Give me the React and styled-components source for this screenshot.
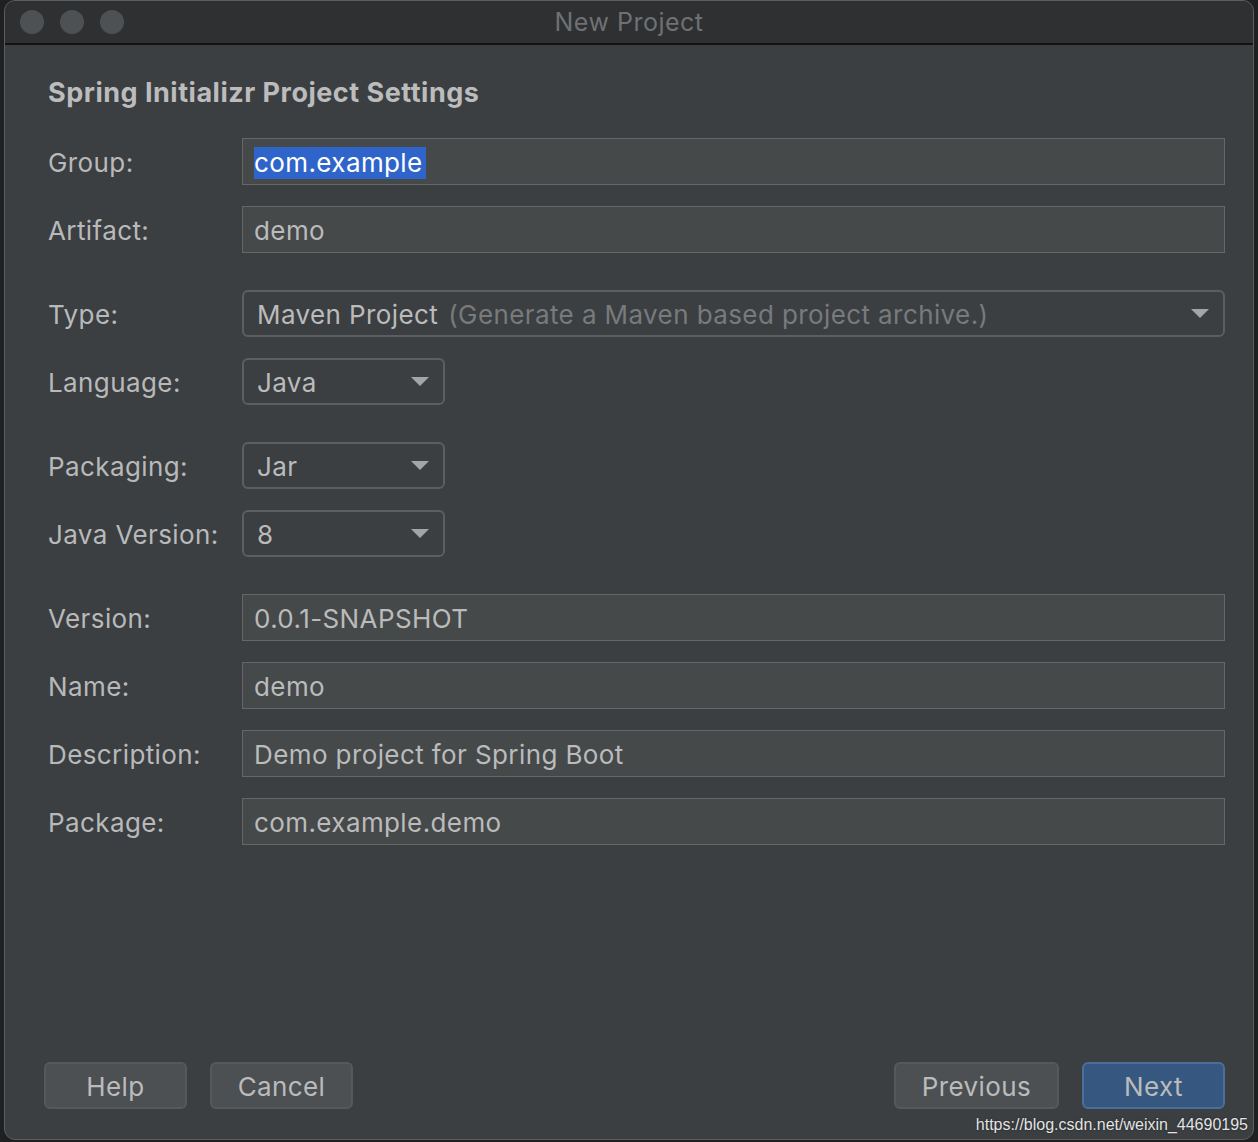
import React from 'react'
import styled, { createGlobalStyle } from 'styled-components'

const GlobalStyle = createGlobalStyle`
	html, body {
		margin: 0;
		padding: 0;
		background: #1f2022;
	}
	body {
		font-family: Inter, "Liberation Sans", sans-serif;
		-webkit-font-smoothing: antialiased;
	}
`

const Page = styled.div`
	width: 1258px;
	height: 1142px;
	padding: 0 4px 2px 4px;
	box-sizing: border-box;
	position: relative;
	overflow: hidden;
`

const Window = styled.div`
	height: 100%;
	display: flex;
	flex-direction: column;
	background: #3b3f42;
	border: 1px solid #5b5d5f;
	border-radius: 11px;
	overflow: hidden;
	box-sizing: border-box;
`

const TitleBar = styled.div`
	height: 42px;
	flex: none;
	display: flex;
	align-items: center;
	position: relative;
	background: #2e3032;
	border-bottom: 2px solid #111213;
	padding-left: 15px;
	gap: 16px;
`

const Light = styled.span`
	width: 24px;
	height: 24px;
	border-radius: 50%;
	background: #4e5153;
`

const Title = styled.div`
	position: absolute;
	left: 0;
	right: 0;
	text-align: center;
	font-size: 25px;
	letter-spacing: 0.5px;
	color: #6e7173;
	pointer-events: none;
`

const Body = styled.div`
	flex: 1;
	display: flex;
	flex-direction: column;
	padding: 32px 28px 0 43px;
`

const Heading = styled.h1`
	margin: 0 0 29px 0;
	font-size: 27px;
	line-height: 32px;
	font-weight: 700;
	color: #bcbcbc;
	letter-spacing: 0.5px;
`

const Section = styled.div`
	display: grid;
	grid-template-columns: 194px 1fr;
	row-gap: 21px;
	margin-bottom: 37px;
`

const Label = styled.label`
	display: flex;
	align-items: center;
	padding-top: 2px;
	font-size: 26px;
	color: #b9b9b9;
	letter-spacing: 0.4px;
`

const TextField = styled.div`
	height: 47px;
	box-sizing: border-box;
	display: flex;
	align-items: center;
	padding: 2px 11px 0 11px;
	background: #45494a;
	border: 1px solid #656767;
	font-size: 26px;
	color: #bbbbbb;
	letter-spacing: 0.4px;
`

const Selection = styled.span`
	background: #2f65ca;
	color: #ffffff;
	line-height: 32px;
	padding-right: 3px;
`

const Combo = styled.div`
	width: ${p => (p.$narrow ? '203px' : 'auto')};
	height: 47px;
	box-sizing: border-box;
	display: flex;
	align-items: center;
	padding: 2px 14px 0 13px;
	border: 2px solid #5c5f61;
	border-radius: 6px;
	font-size: 26px;
	color: #bbbbbb;
	letter-spacing: 0.4px;
`

const ComboText = styled.span`
	flex: 1;
	white-space: nowrap;
`

const Hint = styled.span`
	color: #787a7c;
	margin-left: 10px;
`

const Arrow = styled.span`
	width: 0;
	height: 0;
	margin-top: -3px;
	border-left: 9px solid transparent;
	border-right: 9px solid transparent;
	border-top: 9px solid #a3a5a7;
`

const Footer = styled.div`
	flex: none;
	display: flex;
	align-items: center;
	gap: 23px;
	padding: 0 28px 30px 39px;
`

const Button = styled.button`
	width: ${p => p.$w || 143}px;
	height: 47px;
	box-sizing: border-box;
	border-radius: 6px;
	border: 2px solid ${p => (p.$primary ? '#4a6f98' : '#56595b')};
	background: ${p => (p.$primary ? '#365880' : '#4c5052')};
	color: #bbbbbb;
	font-family: inherit;
	font-size: 26px;
	letter-spacing: 0.4px;
	padding: 2px 0 0 0;
`

const Spacer = styled.div`
	flex: 1;
`

const Watermark = styled.div`
	position: absolute;
	right: 10px;
	bottom: 8px;
	font-family: "Liberation Sans", Arial, sans-serif;
	font-size: 16px;
	color: #e4e4e4;
	text-shadow: 0 0 2px rgba(0, 0, 0, 0.6);
`

function Field({ label, children }) {
	return (
		<>
			<Label>{label}</Label>
			{children}
		</>
	)
}

export default function App() {
	return (
		<>
			<GlobalStyle />
			<Page>
				<Window>
					<TitleBar>
						<Light />
						<Light />
						<Light />
						<Title>New Project</Title>
					</TitleBar>
					<Body>
						<Heading>Spring Initializr Project Settings</Heading>
						<Section>
							<Field label='Group:'>
								<TextField><Selection>com.example</Selection></TextField>
							</Field>
							<Field label='Artifact:'>
								<TextField>demo</TextField>
							</Field>
						</Section>
						<Section>
							<Field label='Type:'>
								<Combo>
									<ComboText>
										Maven Project<Hint>(Generate a Maven based project archive.)</Hint>
									</ComboText>
									<Arrow />
								</Combo>
							</Field>
							<Field label='Language:'>
								<Combo $narrow><ComboText>Java</ComboText><Arrow /></Combo>
							</Field>
						</Section>
						<Section>
							<Field label='Packaging:'>
								<Combo $narrow><ComboText>Jar</ComboText><Arrow /></Combo>
							</Field>
							<Field label='Java Version:'>
								<Combo $narrow><ComboText>8</ComboText><Arrow /></Combo>
							</Field>
						</Section>
						<Section>
							<Field label='Version:'>
								<TextField>0.0.1-SNAPSHOT</TextField>
							</Field>
							<Field label='Name:'>
								<TextField>demo</TextField>
							</Field>
							<Field label='Description:'>
								<TextField>Demo project for Spring Boot</TextField>
							</Field>
							<Field label='Package:'>
								<TextField>com.example.demo</TextField>
							</Field>
						</Section>
					</Body>
					<Footer>
						<Button>Help</Button>
						<Button>Cancel</Button>
						<Spacer />
						<Button $w={165}>Previous</Button>
						<Button $primary>Next</Button>
					</Footer>
				</Window>
				<Watermark>https://blog.csdn.net/weixin_44690195</Watermark>
			</Page>
		</>
	)
}
